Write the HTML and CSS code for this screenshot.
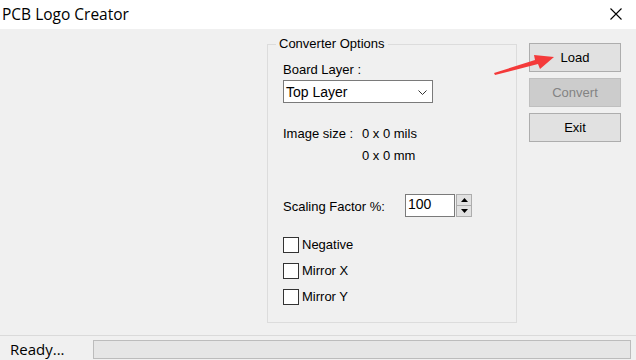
FILE: index.html
```html
<!DOCTYPE html>
<html>
<head>
<meta charset="utf-8">
<link rel="stylesheet" href="styles.css">
</head>
<body>
<div class="window">
  <div class="titlebar">
    <span class="title">PCB Logo Creator</span>
    <svg class="close" width="12" height="12" viewBox="0 0 12 12"><path d="M0.5 0.5 L11.5 11.5 M11.5 0.5 L0.5 11.5" stroke="#000" stroke-width="1.1" fill="none"/></svg>
  </div>
  <div class="main">
    <div class="group">
      <span class="legend">Converter Options</span>
      <div class="label board-label">Board Layer :</div>
      <div class="combo">
        <span>Top Layer</span>
        <svg class="chev" width="9" height="5" viewBox="0 0 9 5"><path d="M0.5 0.5 L4.5 4.5 L8.5 0.5" stroke="#333" stroke-width="1" fill="none"/></svg>
      </div>
      <div class="size-row first"><span class="size-label">Image size :</span><span>0 x 0 mils</span></div>
      <div class="size-row second"><span class="size-label"></span><span>0 x 0 mm</span></div>
      <div class="scale-row">
        <span class="scale-label">Scaling Factor %:</span>
        <div class="num">100</div>
        <div class="spin">
          <div class="spin-btn"><svg width="7" height="4" viewBox="0 0 7 4"><path d="M3.5 0 L7 4 L0 4 Z" fill="#000"/></svg></div>
          <div class="spin-btn"><svg width="7" height="4" viewBox="0 0 7 4"><path d="M0 0 L7 0 L3.5 4 Z" fill="#000"/></svg></div>
        </div>
      </div>
      <div class="check-row first-check"><span class="box"></span><span>Negative</span></div>
      <div class="check-row"><span class="box"></span><span>Mirror X</span></div>
      <div class="check-row"><span class="box"></span><span>Mirror Y</span></div>
    </div>
    <div class="buttons">
      <div class="btn">Load</div>
      <div class="btn disabled">Convert</div>
      <div class="btn">Exit</div>
    </div>
    <svg class="arrow" width="70" height="30" viewBox="0 0 70 30">
      <polygon points="2,24 43,11 42,6 62,8 48,20 46,15 3,26" fill="#f43a3a"/>
    </svg>
  </div>
  <div class="status">
    <span class="ready">Ready...</span>
    <div class="progress"></div>
  </div>
</div>
</body>
</html>
```
FILE: styles.css
```css
html, body {
  margin: 0;
  padding: 0;
}
body {
  width: 636px;
  height: 360px;
  overflow: hidden;
  background: #f0f0f0;
  font-family: "Liberation Sans", Arial, sans-serif;
  font-size: 13px;
  color: #000;
}
.window {
  display: flex;
  flex-direction: column;
  width: 636px;
  height: 360px;
}
.titlebar {
  height: 29px;
  background: #fff;
  display: flex;
  align-items: center;
  justify-content: space-between;
  padding: 0 14px 0 2px;
  box-sizing: border-box;
}
.title {
  font-family: "Open Sans", "Noto Sans", sans-serif;
  font-size: 15.5px;
  color: #000;
  margin-top: -1px;
}
.close {
  display: block;
  margin-top: -2px;
}
.main {
  position: relative;
  height: 306px;
  display: flex;
  align-items: flex-start;
  padding-left: 267px;
  box-sizing: border-box;
}
.group {
  position: relative;
  box-sizing: border-box;
  width: 250px;
  height: 279px;
  margin-top: 15px;
  border: 1px solid #dcdcdc;
  padding: 0 0 0 15px;
  display: flex;
  flex-direction: column;
  align-items: flex-start;
  line-height: 14px;
}
.legend {
  position: absolute;
  left: 8px;
  top: -8px;
  padding: 0 3px;
  background: #f0f0f0;
  line-height: 14px;
}
.board-label {
  margin-top: 18px;
}
.combo {
  margin-top: 3px;
  box-sizing: border-box;
  width: 150px;
  height: 23px;
  background: #fff;
  border: 1px solid #7a7a7a;
  display: flex;
  align-items: center;
  justify-content: space-between;
  padding: 0 5px 0 2px;
  font-size: 14px;
}
.chev {
  display: block;
  margin-top: 1px;
}
.size-row {
  display: flex;
}
.size-row.first {
  margin-top: 24px;
}
.size-row.second {
  margin-top: 8px;
}
.size-label {
  width: 79px;
}
.scale-row {
  margin-top: 31px;
  display: flex;
  align-items: center;
  height: 23px;
}
.scale-label {
  width: 122px;
  margin-top: 3px;
}
.num {
  box-sizing: border-box;
  width: 50px;
  height: 23px;
  background: #fff;
  border: 1px solid #7a7a7a;
  font-size: 14px;
  line-height: 19px;
  padding-left: 2px;
}
.spin {
  margin-left: 1px;
  display: flex;
  flex-direction: column;
  width: 16px;
  height: 23px;
}
.spin-btn {
  flex: 1;
  box-sizing: border-box;
  background: #e1e1e1;
  border: 1px solid #adadad;
  display: flex;
  align-items: center;
  justify-content: center;
}
.spin-btn + .spin-btn {
  border-top: none;
}
.check-row {
  display: flex;
  align-items: center;
  height: 16px;
  margin-top: 10px;
}
.check-row.first-check {
  margin-top: 20px;
}
.box {
  box-sizing: border-box;
  width: 16px;
  height: 16px;
  border: 1px solid #333;
  background: #fff;
  margin-right: 3px;
}
.buttons {
  margin-left: 12px;
  margin-top: 14px;
  display: flex;
  flex-direction: column;
  gap: 6px;
}
.btn {
  box-sizing: border-box;
  width: 92px;
  height: 29px;
  background: #e1e1e1;
  border: 1px solid #adadad;
  display: flex;
  align-items: center;
  justify-content: center;
}
.btn.disabled {
  background: #cccccc;
  border-color: #bfbfbf;
  color: #838383;
}
.arrow {
  position: absolute;
  left: 492px;
  top: 20px;
}
.status {
  height: 25px;
  box-sizing: border-box;
  border-top: 1px solid #dadada;
  display: flex;
  align-items: center;
  padding-left: 10px;
}
.ready {
  font-family: "Open Sans", "Noto Sans", sans-serif;
  font-size: 15px;
  width: 83px;
  margin-top: 2px;
}
.progress {
  box-sizing: border-box;
  width: 538px;
  height: 19px;
  margin-top: 2px;
  background: #e6e6e6;
  border: 1px solid #bcbcbc;
}
```
